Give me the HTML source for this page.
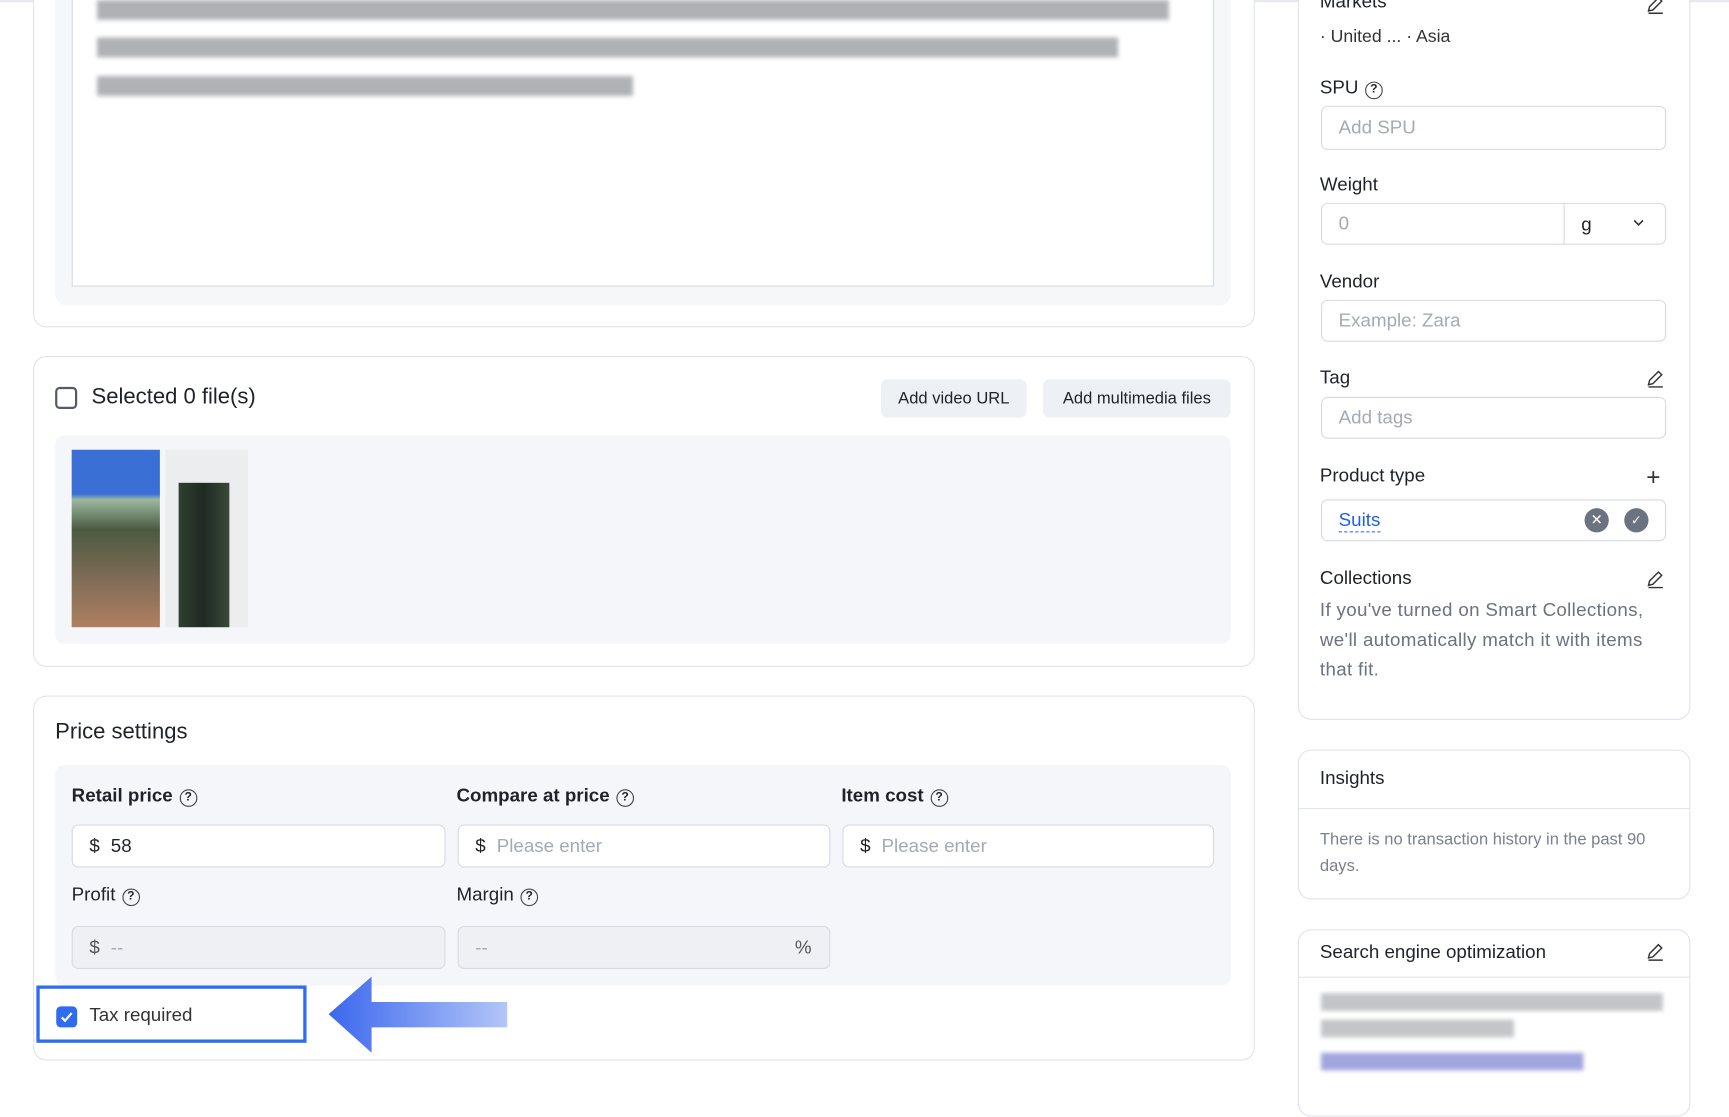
<!DOCTYPE html>
<html><head><meta charset="utf-8"><style>
*{box-sizing:border-box;margin:0;padding:0}
html,body{width:1729px;height:1088px;overflow:hidden;background:#fff;font-family:"Liberation Sans",Arial,sans-serif;color:#1f2329}
#w{position:absolute;left:0;top:0;width:1568px;height:987px;transform:scale(1.10268,1.10233);transform-origin:0 0}
.a{position:absolute}
.card{position:absolute;background:#fff;border:1px solid #dfe3ea;border-radius:12px}
.inp{position:absolute;background:#fff;border:1px solid #d5dae3;border-radius:6px;font-size:17px;color:#a4aab5;padding-left:15px;display:flex;align-items:center}
.lbl{position:absolute;font-size:17px;color:#1f2329}
.q{display:inline-block;width:16px;height:16px;border:1.5px solid #444;border-radius:50%;font-size:11px;text-align:center;line-height:13px;vertical-align:1px;margin-left:6px;font-weight:bold}
.blur{position:absolute;height:18px;background:#9c9ea3;filter:blur(2px);opacity:.8}
.btn{position:absolute;background:#edf0f4;border-radius:6px;font-size:15px;display:flex;align-items:center;justify-content:center;color:#1f2329}
</style></head><body><div id="w">
<div class="a" style="left:0;top:0;width:1568px;height:2px;background:#e6e9f0"></div>

<div class="card" style="left:30px;top:-20px;width:1108px;height:317px"></div>
<div class="a" style="left:50px;top:0;width:1066px;height:277px;background:#f6f7f9;border-radius:0 0 10px 10px"></div>
<div class="a" style="left:65px;top:0;width:1036px;height:260px;background:#fff;border:1px solid #d5dae3;border-top:none"></div>
<div class="blur" style="left:88px;top:0;width:972px"></div>
<div class="blur" style="left:88px;top:34px;width:926px"></div>
<div class="blur" style="left:88px;top:69px;width:486px"></div>

<div class="card" style="left:30px;top:323px;width:1108px;height:282px"></div>
<div class="a" style="left:50px;top:351px;width:20px;height:20px;border:2px solid #555b66;border-radius:4px"></div>
<div class="a" style="left:83px;top:349px;font-size:20px">Selected 0 file(s)</div>
<div class="btn" style="left:799px;top:344px;width:132px;height:35px">Add video URL</div>
<div class="btn" style="left:946px;top:344px;width:170px;height:35px">Add multimedia files</div>
<div class="a" style="left:50px;top:395px;width:1066px;height:189px;background:#f5f6f9;border-radius:8px"></div>
<div class="a" style="left:65px;top:408px;width:80px;height:161px;background:linear-gradient(180deg,#3a6fd6 0,#3a6fd6 25%,#9cb8a0 28%,#4b5a40 45%,#7a6a55 70%,#b08060 100%)"></div>
<div class="a" style="left:150px;top:408px;width:75px;height:161px;background:#ecedee"></div>
<div class="a" style="left:162px;top:438px;width:46px;height:131px;background:linear-gradient(90deg,#2f3f30,#1f2a22 50%,#3a4a3a)"></div>

<div class="card" style="left:30px;top:631px;width:1108px;height:331px"></div>
<div class="a" style="left:50px;top:653px;font-size:20px">Price settings</div>
<div class="a" style="left:50px;top:694px;width:1066px;height:200px;background:#f5f6f9;border-radius:8px"></div>
<div class="lbl" style="left:65px;top:712px;font-weight:bold">Retail price<span class="q">?</span></div>
<div class="lbl" style="left:414px;top:712px;font-weight:bold">Compare at price<span class="q">?</span></div>
<div class="lbl" style="left:763px;top:712px;font-weight:bold">Item cost<span class="q">?</span></div>
<div class="inp" style="left:65px;top:748px;width:339px;height:39px;color:#1f2329"><span style="margin-right:10px">$</span>58</div>
<div class="inp" style="left:415px;top:748px;width:338px;height:39px"><span style="margin-right:10px;color:#1f2329">$</span>Please enter</div>
<div class="inp" style="left:764px;top:748px;width:337px;height:39px"><span style="margin-right:10px;color:#1f2329">$</span>Please enter</div>
<div class="lbl" style="left:65px;top:802px">Profit<span class="q">?</span></div>
<div class="lbl" style="left:414px;top:802px">Margin<span class="q">?</span></div>
<div class="inp" style="left:65px;top:840px;width:339px;height:39px;background:#eef0f4"><span style="margin-right:10px;color:#555">$</span>--</div>
<div class="inp" style="left:415px;top:840px;width:338px;height:39px;background:#eef0f4">--<span style="position:absolute;right:16px;color:#555">%</span></div>
<div class="a" style="left:33px;top:894px;width:245px;height:52px;border:3px solid #2f6cf0"></div>
<div class="a" style="left:51px;top:913px;width:19px;height:19px;background:#2f6cf0;border-radius:4px"><svg width="19" height="19"><path d="M5 10l3 3 6-7" stroke="#fff" stroke-width="2" fill="none"/></svg></div>
<div class="a" style="left:81px;top:911px;font-size:17px;color:#333">Tax required</div>
<svg class="a" style="left:296px;top:884px" width="166" height="74"><defs><linearGradient id="g" x1="0" x2="1"><stop offset="0" stop-color="#3b67ee"/><stop offset="1" stop-color="#b3c6f8"/></linearGradient></defs><path d="M2 36L41 2V25H164V48H41V71Z" fill="url(#g)"/></svg>

<div class="card" style="left:1177px;top:-20px;width:356px;height:673px"></div>
<div class="a" style="left:1197px;top:-8px;font-size:17px">Markets</div>
<div class="a" style="left:1197px;top:25px;font-size:16px;color:#333">· United ... · Asia</div>
<div class="lbl" style="left:1197px;top:70px">SPU<span class="q">?</span></div>
<div class="inp" style="left:1198px;top:96px;width:313px;height:40px">Add SPU</div>
<div class="lbl" style="left:1197px;top:158px">Weight</div>
<div class="inp" style="left:1198px;top:184px;width:313px;height:38px">0</div>
<div class="a" style="left:1418px;top:185px;width:1px;height:36px;background:#d5dae3"></div>
<div class="a" style="left:1434px;top:194px;font-size:17px">g</div>
<svg class="a" style="left:1480px;top:197px" width="12" height="10"><path d="M2 3l4 4 4-4" stroke="#333" stroke-width="1.5" fill="none"/></svg>
<div class="lbl" style="left:1197px;top:246px">Vendor</div>
<div class="inp" style="left:1198px;top:272px;width:313px;height:38px">Example: Zara</div>
<div class="lbl" style="left:1197px;top:333px">Tag</div>
<div class="inp" style="left:1198px;top:360px;width:313px;height:38px">Add tags</div>
<div class="lbl" style="left:1197px;top:422px">Product type</div>
<div class="a" style="left:1493px;top:420px;font-size:22px;color:#333">+</div>
<div class="inp" style="left:1198px;top:453px;width:313px;height:38px"><span style="color:#2360e0;border-bottom:1.5px dashed #2360e0;line-height:20px">Suits</span></div>
<div class="a" style="left:1437px;top:461px;width:22px;height:22px;border-radius:50%;background:#6b7280;color:#fff;font-size:13px;text-align:center;line-height:22px">✕</div>
<div class="a" style="left:1473px;top:461px;width:22px;height:22px;border-radius:50%;background:#6b7280;color:#fff;font-size:12px;text-align:center;line-height:22px">✓</div>
<div class="lbl" style="left:1197px;top:515px">Collections</div>
<div class="a" style="left:1197px;top:540px;width:318px;font-size:17px;line-height:27px;color:#6b7280;letter-spacing:0.3px">If you've turned on Smart Collections, we'll automatically match it with items that fit.</div>
<svg class="a" style="left:1492px;top:-4px" width="18" height="18"><path d="M3 14l1-4 8-8 3 3-8 8z M3 16h13" stroke="#333" stroke-width="1.3" fill="none"/></svg>
<svg class="a" style="left:1492px;top:335px" width="18" height="18"><path d="M3 14l1-4 8-8 3 3-8 8z M3 16h13" stroke="#333" stroke-width="1.3" fill="none"/></svg>
<svg class="a" style="left:1492px;top:517px" width="18" height="18"><path d="M3 14l1-4 8-8 3 3-8 8z M3 16h13" stroke="#333" stroke-width="1.3" fill="none"/></svg>

<div class="card" style="left:1177px;top:680px;width:356px;height:136px"></div>
<div class="lbl" style="left:1197px;top:696px">Insights</div>
<div class="a" style="left:1178px;top:733px;width:354px;height:1px;background:#e3e6ec"></div>
<div class="a" style="left:1197px;top:750px;width:300px;font-size:15px;line-height:24px;color:#7b818c">There is no transaction history in the past 90 days.</div>

<div class="card" style="left:1177px;top:843px;width:356px;height:170px"></div>
<div class="lbl" style="left:1197px;top:854px">Search engine optimization</div>
<svg class="a" style="left:1492px;top:855px" width="18" height="18"><path d="M3 14l1-4 8-8 3 3-8 8z M3 16h13" stroke="#333" stroke-width="1.3" fill="none"/></svg>
<div class="a" style="left:1178px;top:886px;width:354px;height:1px;background:#e3e6ec"></div>
<div class="blur" style="left:1198px;top:901px;width:310px;height:16px;background:#b5b7bb"></div>
<div class="blur" style="left:1198px;top:925px;width:175px;height:16px;background:#b5b7bb"></div>
<div class="blur" style="left:1198px;top:955px;width:238px;height:16px;background:#8a8fd6"></div>
</div></body></html>
